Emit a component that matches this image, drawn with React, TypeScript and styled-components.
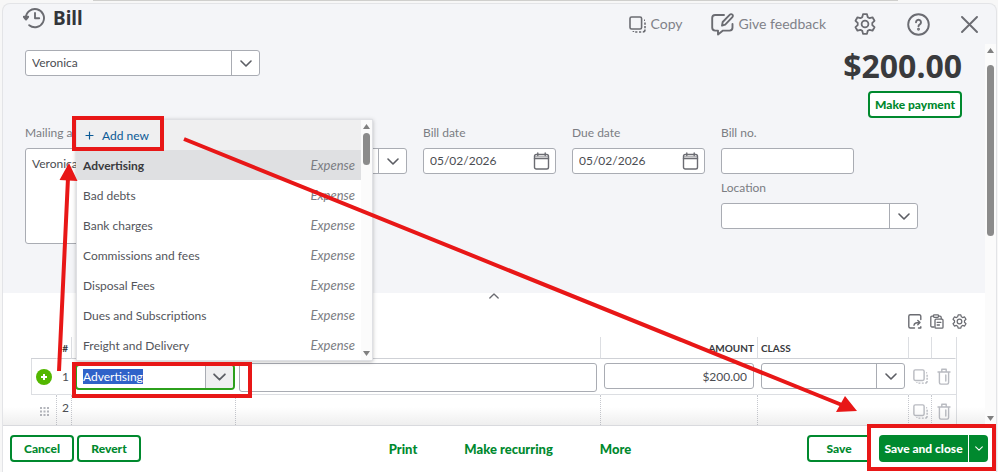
import React, { useEffect, useRef } from "react";
import styled, { createGlobalStyle, css } from "styled-components";

const GlobalStyle = createGlobalStyle`
  * { box-sizing: border-box; }
  body {
    margin: 0;
    background: #f7f7f7;
    font-family: Lato, "Open Sans", sans-serif;
    font-size: 12px;
    color: #4b4d52;
  }
  button, input, select, textarea { font: inherit; color: inherit; margin: 0; }
  button { cursor: pointer; }
`;

const green = "#00892e";
const line = "#a9acb3";

const Page = styled.div`
  position: relative;
  display: flex;
  flex-direction: column;
  height: 100vh;
  overflow: hidden;
`;

const BackdropEdge = styled.div`
  flex: none;
  height: 1px;
  margin: 0 10% 2px 93px;
  background: #cfcfcd;
`;

const Panel = styled.main`
  flex: 1;
  min-height: 0;
  display: flex;
  flex-direction: column;
  margin: 0 1px 0 2px;
  border: 1px solid #e3e4e7;
  border-bottom: 0;
  border-radius: 8px 8px 0 0;
  background: #f4f5f8;
  overflow: hidden;
`;

const Header = styled.header`
  flex: none;
  display: flex;
  justify-content: space-between;
  height: 40px;
  padding: 0 18px 0 20px;
`;

const Title = styled.h1`
  display: flex;
  align-items: center;
  gap: 7px;
  height: 27px;
  margin: 0;
  font: 700 19px/24px "Noto Sans", sans-serif;
  color: #33353a;
  & > svg { color: #6b6c72; }
`;

const HeaderActions = styled.div`
  display: flex;
  align-items: center;
  gap: 28px;
`;

const IconGroup = styled.div`
  display: flex;
  align-items: center;
  gap: 31px;
`;

const GhostButton = styled.button`
  display: flex;
  align-items: center;
  gap: 5px;
  padding: 0;
  border: 0;
  background: none;
  color: #6b6c72;
  font-size: 14px;
  line-height: 20px;
  & > span { color: #808289; }
`;

const Workspace = styled.div`
  flex: 1;
  min-height: 0;
  display: flex;
  overflow: hidden;
`;

const Content = styled.div`
  flex: 1;
  min-width: 0;
  display: flex;
  flex-direction: column;
`;

const Details = styled.section`
  flex: none;
  padding: 0 23px 49px 22px;
`;

const TopRow = styled.div`
  display: flex;
  justify-content: space-between;
`;

const VendorSlot = styled.div`
  width: 235px;
  padding-top: 6px;
`;

const Balance = styled.div`
  display: flex;
  flex-direction: column;
  align-items: flex-end;
  gap: 3px;
`;

const Total = styled.strong`
  font: 700 32px/44px "Noto Sans", sans-serif;
  color: #393a3d;
`;

const FieldRow = styled.div`
  display: flex;
  align-items: flex-start;
  gap: 16px;
  padding-top: 6px;
`;

const FieldColumn = styled.div<{ $w: number }>`
  flex: none;
  display: flex;
  flex-direction: column;
  gap: 5px;
  width: ${(p) => p.$w}px;
`;

const Field = styled.label<{ $w?: number }>`
  display: flex;
  flex-direction: column;
  gap: 6px;
  width: ${(p) => (p.$w ? p.$w + "px" : "auto")};
  font-size: 12px;
  line-height: 18px;
  color: #7b7d83;
`;

const frame = css`
  border: 1px solid ${line};
  border-radius: 3px;
  background: #fff;
  color: #4b4d52;
  font-size: 12px;
`;

const TextInput = styled.input<{ $h?: number; $right?: boolean }>`
  ${frame}
  display: block;
  width: 100%;
  height: ${(p) => p.$h ?? 26}px;
  padding: 0 6px;
  text-align: ${(p) => (p.$right ? "right" : "left")};
`;

const Address = styled.textarea`
  ${frame}
  display: block;
  width: 100%;
  height: 96px;
  padding: 6px;
  line-height: 18px;
  resize: none;
`;

const Combo = styled.div<{ $active?: boolean }>`
  ${frame}
  display: grid;
  grid-template-columns: 1fr 28px;
  width: 100%;
  height: 26px;
  overflow: hidden;
  ${(p) =>
    p.$active &&
    css`
      border: 2px solid #2ca01c;
      border-radius: 4px;
    `}
`;

const ComboInput = styled.input`
  min-width: 0;
  padding: 0 6px 1px;
  border: 0;
  outline: 0;
  background: none;
  &::selection { background: #2f62c9; color: #fff; }
`;

const ComboSelect = styled.select`
  grid-area: 1 / 1 / 2 / 3;
  min-width: 0;
  padding: 0 34px 0 6px;
  border: 0;
  outline: 0;
  background: none;
  appearance: none;
`;

const comboEnd = css`
  display: flex;
  align-items: center;
  justify-content: center;
  padding: 0;
  border: 0;
  border-left: 1px solid ${line};
  color: #5c5e64;
`;

const ComboButton = styled.button<{ $shade?: boolean }>`
  ${comboEnd}
  background: ${(p) => (p.$shade ? "#efeff0" : "none")};
`;

const ComboMark = styled.span`
  ${comboEnd}
  grid-area: 1 / 2 / 2 / 3;
  pointer-events: none;
`;

const DateBox = styled.div`
  ${frame}
  display: flex;
  align-items: center;
  height: 26px;
  padding: 0 5px 0 6px;
  & > input {
    flex: 1;
    min-width: 0;
    padding: 0 0 1px;
    border: 0;
    outline: 0;
    background: none;
  }
  & > svg { color: #6b6c72; }
`;

const Lines = styled.section`
  flex: 1;
  min-height: 0;
  position: relative;
  padding: 0 28px;
  background: #fff;
  &::after {
    content: "";
    position: absolute;
    inset: auto 0 0 0;
    height: 18px;
    background: linear-gradient(rgba(120, 120, 120, 0), rgba(120, 120, 120, 0.12));
    pointer-events: none;
  }
`;

const Collapse = styled.button`
  display: flex;
  margin: 0 auto;
  padding: 0;
  border: 0;
  background: none;
  color: #6b6c72;
`;

const Tools = styled.div`
  display: flex;
  align-items: flex-start;
  justify-content: flex-end;
  gap: 8px;
  height: 38px;
  padding-top: 15px;
  margin-right: -10px;
`;

const IconButton = styled.button<{ $faint?: boolean }>`
  display: inline-flex;
  align-items: center;
  justify-content: center;
  padding: 0;
  border: 0;
  background: none;
  color: ${(p) => (p.$faint ? "#b9bbc1" : "#6b6c72")};
`;

const Table = styled.table`
  width: 100%;
  table-layout: fixed;
  border-collapse: separate;
  border-spacing: 0;
  border-right: 1px solid #dcdee2;
`;

const Th = styled.th<{ $right?: boolean }>`
  height: 22px;
  padding: 0 3px;
  border-right: 1px solid #dcdee2;
  border-bottom: 1px solid #cfd1d6;
  font-size: 10px;
  line-height: 12px;
  text-align: ${(p) => (p.$right ? "right" : "left")};
  color: #393a3d;
  &:first-child, &:last-child, &:nth-child(3) { border-right-color: transparent; }
`;

const Row = styled.tr<{ $current?: boolean }>`
  & > td {
    height: ${(p) => (p.$current ? 36 : 34)}px;
    padding: ${(p) => (p.$current ? "4px 3px 0 3px" : "3px 2px 0 4px")};
    vertical-align: top;
    border-bottom: 1px solid #dcdee2;
    border-right: 1px ${(p) => (p.$current ? "solid transparent" : "dotted #c6c8ce")};
  }
  & > td:last-child { border-right: 0; }
  & > td:first-child {
    border-left: 1px solid ${(p) => (p.$current ? "#dcdee2" : "transparent")};
  }
`;

const IconCell = styled.td`
  && {
    padding: 0;
    text-align: center;
    vertical-align: middle;
    line-height: 0;
  }
`;

const NumberCell = styled.td<{ $drop?: boolean }>`
  && {
    padding: ${(p) => (p.$drop ? 8 : 3)}px 2px 0 0;
    text-align: right;
    font-size: 12px;
    line-height: 20px;
  }
`;

const CategoryCell = styled.td`
  && {
    position: relative;
    z-index: 2;
    padding: 5px 0 0 3px;
  }
`;

const Menu = styled.div`
  position: absolute;
  left: 4px;
  bottom: calc(100% - 2px);
  display: flex;
  width: 297px;
  border: 1px solid #dfe0e4;
  background: #fff;
  box-shadow: 0 1px 4px rgba(0, 0, 0, 0.25);
`;

const MenuItems = styled.div`
  flex: 1;
`;

const AddNew = styled.button`
  display: flex;
  align-items: center;
  gap: 8px;
  width: 100%;
  height: 30px;
  padding: 0 8px;
  border: 0;
  background: #efeff0;
  color: #0b5a96;
`;

const Option = styled.div<{ $on?: boolean }>`
  display: flex;
  align-items: center;
  justify-content: space-between;
  height: 30px;
  padding: 0 6px;
  background: ${(p) => (p.$on ? "#dfe0e2" : "#fff")};
  color: ${(p) => (p.$on ? "#393a3d" : "#53555b")};
  font-weight: ${(p) => (p.$on ? 700 : 400)};
  & > em { font-size: 13px; font-weight: 400; color: #7b7d83; }
`;

const Scroller = styled.div<{ $w: number }>`
  flex: none;
  display: flex;
  flex-direction: column;
  align-items: center;
  width: ${(p) => p.$w}px;
  padding: 4px 0;
  background: #fbfbfb;
`;

const Thumb = styled.div<{ $h: number; $top: number }>`
  width: 7px;
  height: ${(p) => p.$h}px;
  margin: ${(p) => p.$top}px 0 auto;
  border-radius: 4px;
  background: #8b8b8b;
`;

const Footer = styled.footer`
  flex: none;
  display: grid;
  grid-template-columns: 1fr auto 1fr;
  align-items: start;
  height: 47px;
  padding: 9px 8px 0 7px;
  border-top: 1px solid #d9dade;
  background: #fff;
`;

const FooterGroup = styled.div<{ $end?: boolean }>`
  display: flex;
  gap: ${(p) => (p.$end ? 8 : 3)}px;
  justify-content: ${(p) => (p.$end ? "flex-end" : "flex-start")};
`;

const FooterLinks = styled.nav`
  display: flex;
  gap: 47px;
  margin-left: 22px;
`;

const TextButton = styled.button`
  height: 28px;
  padding: 0;
  border: 0;
  background: none;
  color: ${green};
  font-size: 13px;
  font-weight: 900;
`;

const OutlineButton = styled.button<{ $w: number }>`
  width: ${(p) => p.$w}px;
  height: 27px;
  padding: 0;
  border: 2px solid ${green};
  border-radius: 4px;
  background: #fff;
  color: ${green};
  font-weight: 900;
`;

const Split = styled.div`
  display: flex;
  gap: 1px;
`;

const SolidButton = styled.button<{ $w: number; $side: "left" | "right" }>`
  display: flex;
  align-items: center;
  justify-content: center;
  width: ${(p) => p.$w}px;
  height: 27px;
  padding: 0;
  border: 0;
  border-radius: ${(p) => (p.$side === "left" ? "4px 0 0 4px" : "0 4px 4px 0")};
  background: ${green};
  color: #fff;
  font-weight: 900;
`;

const Annotations = styled.svg`
  position: absolute;
  inset: 0;
  z-index: 10;
  width: 100%;
  height: 100%;
  pointer-events: none;
`;

type IconProps = { size?: number };

const Svg = ({
  w,
  h,
  vb,
  sw = 2,
  children,
}: {
  w: number;
  h: number;
  vb: string;
  sw?: number;
  children: React.ReactNode;
}) => (
  <svg
    width={w}
    height={h}
    viewBox={vb}
    fill="none"
    stroke="currentColor"
    strokeWidth={sw}
    strokeLinecap="round"
    strokeLinejoin="round"
    aria-hidden="true"
  >
    {children}
  </svg>
);

const Chevron = ({ size = 12, up = false }: IconProps & { up?: boolean }) => (
  <Svg w={size} h={Math.round(size * 0.6)} vb="0 0 12 7" sw={1.6}>
    <path d={up ? "M1 6l5-5 5 5" : "M1 1l5 5 5-5"} />
  </Svg>
);

const HistoryIcon = () => (
  <Svg w={23} h={22} vb="0 0 23 22" sw={1.9}>
    <path d="M2.8 11a9.1 9.1 0 1 1 3.4 7.2" />
    <path d="M.8 9.800h4.400L3 12.600z" fill="currentColor" />
    <path d="M12 6v5.200h4.200" />
  </Svg>
);

const CopyIcon = ({ size = 17 }: IconProps) => (
  <Svg w={size} h={size} vb="0 0 17 17" sw={1.6}>
    <rect x="1" y="1" width="11.6" height="12" rx="1.6" />
    <path d="M15 4.300h1M16 6.500v2.200M16 10v2.200M16 13.600c0 1.500-.8 2.400-2.200 2.400M12.200 16H10M8.400 16H6.200M4.400 15v1" strokeLinecap="butt" />
  </Svg>
);

const FeedbackIcon = () => (
  <Svg w={23} h={23} vb="0 0 23 23" sw={1.9}>
    <path d="M13 2H4.200A3 3 0 0 0 1.200 5v9.600a3 3 0 0 0 3 3H7v4l5-4h6.500a3 3 0 0 0 3-3V11" />
    <path d="M11 12.600l.7-3.600 7.200-7.300a1.700 1.700 0 0 1 2.500 2.400l-7.200 7.500z" />
  </Svg>
);

const GearIcon = ({ size = 22 }: IconProps) => (
  <Svg w={size} h={size} vb="0 0 22 22" sw={1.8}>
    <path d="M9 1.200h4l.7 2.900 1.900 1.100 2.900-.9 2 3.500-2.200 2v2.400l2.200 2-2 3.500-2.900-.9-1.900 1.100-.7 2.900H9l-.7-2.900-1.900-1.100-2.900.9-2-3.500 2.200-2V9.800l-2.200-2 2-3.500 2.900.9 1.900-1.100z" />
    <circle cx="11" cy="11" r="3.400" />
  </Svg>
);

const HelpIcon = () => (
  <Svg w={23} h={23} vb="0 0 23 23" sw={1.9}>
    <circle cx="11.500" cy="11.500" r="10.300" />
    <path d="M9 9.200a2.500 2.500 0 1 1 3.800 2.200c-.9.500-1.300.9-1.300 1.800" />
    <circle cx="11.500" cy="16.200" r=".5" fill="currentColor" />
  </Svg>
);

const CloseIcon = () => (
  <Svg w={17} h={17} vb="0 0 17 17" sw={1.9}>
    <path d="M1 1l15 15M16 1L1 16" />
  </Svg>
);

const CalendarIcon = () => (
  <Svg w={17} h={18} vb="0 0 17 18" sw={1.4}>
    <rect x="1.500" y="2.500" width="14" height="14.500" rx="1.800" />
    <path d="M1.500 6.500h14M4.800 1v2.500M12.200 1v2.500" />
    <path d="M2 4.600h13" strokeOpacity=".5" />
  </Svg>
);

const ExportIcon = () => (
  <Svg w={14} h={15} vb="0 0 14 15" sw={1.4}>
    <path d="M12.800 5.500V2.300c0-.9-.6-1.500-1.500-1.500H2.300C1.400.8.8 1.400.8 2.300v10.200c0 .9.600 1.500 1.500 1.500h4.200M10.500 14h2.300v-1.200" />
    <path d="M6 11.200c.2-1.900 1.500-2.700 5.500-2.700M9.800 6.400l2.200 2.100-2.200 2.200" />
  </Svg>
);

const PasteIcon = () => (
  <Svg w={14} h={15} vb="0 0 14 15" sw={1.3}>
    <path d="M4 13H2c-.7 0-1.200-.5-1.200-1.200V3.400c0-.7.500-1.200 1.200-1.200h1.500M8.500 2.200H10c.7 0 1.200.5 1.200 1.200v1.400" />
    <rect x="3.500" y=".8" width="5" height="2.600" rx=".8" />
    <rect x="5" y="5.200" width="8" height="9" rx="1" />
    <path d="M7.200 8.400h3.600M7.200 11h2.200" />
  </Svg>
);

const TrashIcon = () => (
  <Svg w={14} h={17} vb="0 0 14 17" sw={1.4}>
    <path d="M1 4h12M4.800 3.600V1.300h4.400v2.300M2.400 4.200v10.400c0 .9.500 1.500 1.400 1.500h6.400c.9 0 1.400-.6 1.400-1.500V4.200M8.800 7v6" />
  </Svg>
);

const AddIcon = () => (
  <svg width="16" height="16" viewBox="0 0 16 16" aria-hidden="true">
    <circle cx="8" cy="8" r="8" fill="#53b700" />
    <path d="M8 5v6M5 8h6" stroke="#fff" strokeWidth="2" />
  </svg>
);

const GripIcon = () => (
  <svg width="9" height="9" viewBox="0 0 9 9" fill="#b4b6bc" aria-hidden="true">
    {[0, 3.5, 7].flatMap((x) => [0, 3.5, 7].map((y) => <rect key={x + "-" + y} x={x} y={y} width="2" height="2" />))}
  </svg>
);

const ScrollArrow = ({ down = false }: { down?: boolean }) => (
  <svg width="7" height="5" viewBox="0 0 7 5" fill="#808080" aria-hidden="true">
    <path d={down ? "M0 0h7L3.500 5z" : "M0 5h7L3.500 0z"} />
  </svg>
);

const accounts = [
  "Advertising",
  "Bad debts",
  "Bank charges",
  "Commissions and fees",
  "Disposal Fees",
  "Dues and Subscriptions",
  "Freight and Delivery",
];

const SelectBox = ({ label }: { label: string }) => (
  <Combo>
    <ComboSelect aria-label={label} defaultValue="">
      <option value="" />
    </ComboSelect>
    <ComboMark>
      <Chevron />
    </ComboMark>
  </Combo>
);

const DateField = ({ label }: { label: string }) => (
  <Field>
    {label}
    <DateBox>
      <input defaultValue="05/02/2026" />
      <CalendarIcon />
    </DateBox>
  </Field>
);

const AccountMenu = () => (
  <Menu>
    <MenuItems>
      <AddNew>
        <Svg w={9} h={9} vb="0 0 9 9" sw={1.2}>
          <path d="M4.500 1v7M1 4.500h7" />
        </Svg>
        Add new
      </AddNew>
      <div role="listbox" aria-label="Category">
        {accounts.map((name, i) => (
          <Option key={name} role="option" aria-selected={i === 0} $on={i === 0}>
            {name}
            <em>Expense</em>
          </Option>
        ))}
      </div>
    </MenuItems>
    <Scroller $w={11}>
      <ScrollArrow />
      <Thumb $h={32} $top={4} />
      <ScrollArrow down />
    </Scroller>
  </Menu>
);

const RowActions = () => (
  <>
    <IconCell>
      <IconButton $faint aria-label="Duplicate line">
        <CopyIcon size={15} />
      </IconButton>
    </IconCell>
    <IconCell>
      <IconButton $faint aria-label="Delete line">
        <TrashIcon />
      </IconButton>
    </IconCell>
  </>
);

export default function App() {
  const category = useRef<HTMLInputElement>(null);

  useEffect(() => {
    category.current?.focus({ preventScroll: true });
    category.current?.select();
  }, []);

  return (
    <>
      <GlobalStyle />
      <Page>
        <BackdropEdge />
        <Panel>
          <Header>
            <Title>
              <HistoryIcon />
              Bill
            </Title>
            <HeaderActions>
              <GhostButton>
                <CopyIcon />
                <span>Copy</span>
              </GhostButton>
              <GhostButton>
                <FeedbackIcon />
                <span>Give feedback</span>
              </GhostButton>
              <IconGroup>
                <IconButton aria-label="Settings">
                  <GearIcon />
                </IconButton>
                <IconButton aria-label="Help">
                  <HelpIcon />
                </IconButton>
                <IconButton aria-label="Close">
                  <CloseIcon />
                </IconButton>
              </IconGroup>
            </HeaderActions>
          </Header>

          <Workspace>
            <Content>
              <Details>
                <TopRow>
                  <VendorSlot>
                    <Combo>
                      <ComboInput aria-label="Vendor" defaultValue="Veronica" />
                      <ComboButton aria-label="Show vendors">
                        <Chevron />
                      </ComboButton>
                    </Combo>
                  </VendorSlot>
                  <Balance>
                    <Total>$200.00</Total>
                    <OutlineButton $w={94}>Make payment</OutlineButton>
                  </Balance>
                </TopRow>
                <FieldRow>
                  <FieldColumn $w={233}>
                    <Field>
                      Mailing address
                      <Address defaultValue="Veronica" />
                    </Field>
                  </FieldColumn>
                  <FieldColumn $w={133}>
                    <Field>
                      Terms
                      <SelectBox label="Terms" />
                    </Field>
                  </FieldColumn>
                  <FieldColumn $w={133}>
                    <DateField label="Bill date" />
                  </FieldColumn>
                  <FieldColumn $w={133}>
                    <DateField label="Due date" />
                  </FieldColumn>
                  <FieldColumn $w={197}>
                    <Field $w={133}>
                      Bill no.
                      <TextInput />
                    </Field>
                    <Field>
                      Location
                      <SelectBox label="Location" />
                    </Field>
                  </FieldColumn>
                </FieldRow>
              </Details>

              <Lines>
                <Collapse aria-label="Collapse">
                  <Chevron size={10} up />
                </Collapse>
                <Tools>
                  <IconButton aria-label="Export">
                    <ExportIcon />
                  </IconButton>
                  <IconButton aria-label="Paste">
                    <PasteIcon />
                  </IconButton>
                  <IconButton aria-label="Table settings">
                    <GearIcon size={15} />
                  </IconButton>
                </Tools>
                <Table>
                  <colgroup>
                    <col style={{ width: 26 }} />
                    <col style={{ width: 15 }} />
                    <col style={{ width: 164 }} />
                    <col />
                    <col style={{ width: 157 }} />
                    <col style={{ width: 151 }} />
                    <col style={{ width: 23 }} />
                    <col style={{ width: 24 }} />
                  </colgroup>
                  <thead>
                    <tr>
                      <Th />
                      <Th $right>#</Th>
                      <Th />
                      <Th />
                      <Th $right>AMOUNT</Th>
                      <Th>CLASS</Th>
                      <Th />
                      <Th />
                    </tr>
                  </thead>
                  <tbody>
                    <Row $current>
                      <IconCell>
                        <IconButton aria-label="Add line">
                          <AddIcon />
                        </IconButton>
                      </IconCell>
                      <NumberCell $drop>1</NumberCell>
                      <CategoryCell>
                        <Combo $active>
                          <ComboInput ref={category} aria-label="Category" defaultValue="Advertising" />
                          <ComboButton $shade aria-label="Show categories">
                            <Chevron size={13} />
                          </ComboButton>
                        </Combo>
                        <AccountMenu />
                      </CategoryCell>
                      <td>
                        <TextInput $h={29} aria-label="Description" />
                      </td>
                      <td>
                        <TextInput $right aria-label="Amount" defaultValue="$200.00" />
                      </td>
                      <td>
                        <SelectBox label="Class" />
                      </td>
                      <RowActions />
                    </Row>
                    <Row>
                      <IconCell>
                        <GripIcon />
                      </IconCell>
                      <NumberCell>2</NumberCell>
                      <td />
                      <td />
                      <td />
                      <td />
                      <RowActions />
                    </Row>
                  </tbody>
                </Table>
              </Lines>
            </Content>
            <Scroller $w={11}>
              <ScrollArrow />
              <Thumb $h={171} $top={12} />
              <ScrollArrow down />
            </Scroller>
          </Workspace>

          <Footer>
            <FooterGroup>
              <OutlineButton $w={64}>Cancel</OutlineButton>
              <OutlineButton $w={64}>Revert</OutlineButton>
            </FooterGroup>
            <FooterLinks>
              <TextButton>Print</TextButton>
              <TextButton>Make recurring</TextButton>
              <TextButton>More</TextButton>
            </FooterLinks>
            <FooterGroup $end>
              <OutlineButton $w={64}>Save</OutlineButton>
              <Split>
                <SolidButton $w={89} $side="left">
                  Save and close
                </SolidButton>
                <SolidButton $w={19} $side="right" aria-label="More save options">
                  <Chevron size={8} />
                </SolidButton>
              </Split>
            </FooterGroup>
          </Footer>
        </Panel>

        <Annotations viewBox="0 0 998 472" preserveAspectRatio="none" fill="none" stroke="#e81717" strokeWidth="4" aria-hidden="true">
          <rect x="74" y="118" width="88" height="31" />
          <rect x="74" y="364" width="176" height="32" />
          <rect x="869" y="426" width="125" height="43" />
          <path d="M59 371L68 178M184 139L842 405" />
          <path d="M69 163l8.500 18-18-1zM857 411l-21 1 9-16z" fill="#e81717" stroke="none" />
        </Annotations>
      </Page>
    </>
  );
}
